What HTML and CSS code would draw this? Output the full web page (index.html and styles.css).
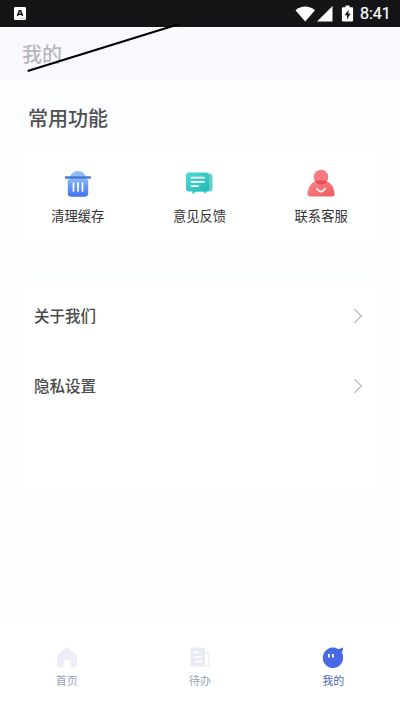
FILE: index.html
```html
<!DOCTYPE html>
<html lang="zh-CN">
<head>
<meta charset="utf-8">
<title>我的</title>
<link rel="stylesheet" href="styles.css">
</head>
<body>
<div class="app">
  <div class="status">
    <svg class="status-app" width="12" height="13" viewBox="0 0 12 13"><rect width="12" height="13" rx="1.3" fill="#fff"/><path d="M3.4 9 L5.4 3.8 H6.6 L8.6 9 M4.2 7.2 H7.8" fill="none" stroke="#151517" stroke-width="1.5"/><path d="M6.5 11.5H11" stroke="#777" stroke-width=".8" stroke-dasharray="1 .6"/></svg>
    <svg width="63" height="18" viewBox="0 0 63 18" fill="#fff"><path d="M.5 5.200C6.300 .2 14 .2 20 5.200L10.200 16.500Z"/><path d="M37.500 1V16.500H22Z"/><path fill-rule="evenodd" d="M48.500 .5h4V2.200h2.600a1 1 0 0 1 1 1V15.500a1 1 0 0 1-1 1h-9.200a1 1 0 0 1-1-1V3.200a1 1 0 0 1 1-1h2.600ZM51.700 4.600 47.600 10.200H50V14.400L53.500 8.600H51.200Z" transform="translate(2)"/></svg>
    <span class="clock">8:41</span>
  </div>
  <header class="header">我的
    <svg class="slash" width="160" height="56" viewBox="0 0 160 56"><path d="M8.500 50.800 158.500 4.300" stroke="#000" stroke-width="2.200" stroke-linecap="round"/></svg>
  </header>
  <main class="main">
    <h2 class="heading">常用功能</h2>
    <section class="card tools">
      <div class="tool">
        <svg width="30" height="30" viewBox="0 0 30 30"><defs><linearGradient id="bin" x1="0" y1="0" x2="0" y2="1"><stop stop-color="#82b4fb"/><stop offset="1" stop-color="#3f70ed"/></linearGradient></defs><circle cx="15" cy="10.500" r="8.500" fill="#8dbcff"/><path d="M4.800 10.500H25.200V24.500Q25 27.800 21.500 27.800H8.500Q5 27.800 4.800 24.500Z" fill="url(#bin)"/><path d="M2 7.300H28V9.700H2Z" fill="#4a75cf"/><path d="M10.500 14V22M15 14V22M19.500 14V22" stroke="#fff" stroke-width="1.700" stroke-linecap="round"/></svg>
        <span>清理缓存</span>
      </div>
      <div class="tool">
        <svg width="30" height="30" viewBox="0 0 30 30"><defs><linearGradient id="chat" x1="0" y1="0" x2="1" y2="1"><stop stop-color="#51d9d2"/><stop offset="1" stop-color="#1bb9b2"/></linearGradient></defs><path d="M9 4.500H25.500Q28.500 4.500 28.500 8V19.500Q28.500 22.500 26 22.500H23.500L20 25V22.500H9Z" fill="#62cfca"/><path d="M5 3.500H22Q25 3.500 25 6.500V19.500Q25 22.500 22 22.500H12L8.500 25.300V22.500H5Q2 22.500 2 19.500V6.500Q2 3.500 5 3.500Z" fill="url(#chat)"/><path d="M7.500 8.700H20M7.500 12.900H20M7.500 17.100H14" stroke="#fff" stroke-width="1.700" stroke-linecap="round"/></svg>
        <span>意见反馈</span>
      </div>
      <div class="tool">
        <svg width="30" height="30" viewBox="0 0 30 30"><defs><linearGradient id="body" x1="0" y1="0" x2="1" y2="1"><stop stop-color="#fa898b"/><stop offset="1" stop-color="#ed5963"/></linearGradient></defs><path d="M1.500 25C2 17 6 12.500 12 11.500H18C24 12.500 28 17 28.500 25Q28.500 27.500 25.500 27.500H4.500Q1.500 27.500 1.500 25Z" fill="url(#body)"/><circle cx="15" cy="8" r="7.300" fill="#f77b7e"/><path d="M9 12.400Q15 10 21 12.400Q19 15.500 15 15.500T9 12.400Z" fill="#e84f56"/><path d="M10.800 19.500Q15 25.500 19.200 19.500" fill="none" stroke="#ffe9e6" stroke-width="2" stroke-linecap="round"/></svg>
        <span>联系客服</span>
      </div>
    </section>
    <section class="card list">
      <div class="row"><span>关于我们</span><svg width="10" height="16" viewBox="0 0 10 16"><path d="M1.500 1.200 8.300 8 1.500 14.800" fill="none" stroke="#c3c3c3" stroke-width="1.600"/></svg></div>
      <div class="row"><span>隐私设置</span><svg width="10" height="16" viewBox="0 0 10 16"><path d="M1.500 1.200 8.300 8 1.500 14.800" fill="none" stroke="#c3c3c3" stroke-width="1.600"/></svg></div>
    </section>
  </main>
  <nav class="nav">
    <div class="tab">
      <svg width="24" height="24" viewBox="0 0 24 24"><path d="M11 2.900Q12 2.200 13 2.900L21 9.500Q22 10.400 22 11.500V20.500Q22 22.500 20 22.500H15.500V18.500Q15.500 15 12 15T8.500 18.500V22.500H4Q2 22.500 2 20.500V11.500Q2 10.400 3 9.500Z" fill="#edeef7"/></svg>
      <span>首页</span>
    </div>
    <div class="tab">
      <svg width="24" height="24" viewBox="0 0 24 24"><path d="M4.500 2.500H15Q17 2.500 17 4.500V21.500H4.500Q2.500 21.500 2.500 19.500V4.500Q2.500 2.500 4.500 2.500Z" fill="#e9ebf4"/><path d="M17.500 8H19.500Q21 8 21 9.500V19.500Q21 21 19 21H17.500" fill="none" stroke="#e9ebf4" stroke-width="1.300"/><path d="M6 7.500H11M6 12H14M6 16.500H14" stroke="#fff" stroke-width="1.700"/></svg>
      <span>待办</span>
    </div>
    <div class="tab active">
      <svg width="24" height="24" viewBox="0 0 24 24"><path d="M16.500 3.700Q19 4.500 22 2.300Q22.300 5.500 20.700 7.600A10.200 10.200 0 1 1 16.500 3.700Z" fill="#4769e4"/><path d="M7.900 9V12.500M11.900 9V12.500" stroke="#fff" stroke-width="1.800"/></svg>
      <span>我的</span>
    </div>
  </nav>
</div>
</body>
</html>
```
FILE: styles.css
```css
* { box-sizing: border-box; }
body {
  margin: 0;
  font-family: "Noto Sans CJK SC", sans-serif;
  background: #fcfdff;
}
.app {
  width: 400px;
  height: 711px;
  display: flex;
  flex-direction: column;
  overflow: hidden;
}
svg { display: block; flex: none; }
.status {
  height: 27px;
  flex: none;
  display: flex;
  align-items: center;
  padding: 0 9px 0 14px;
  background: #151517;
  color: #fff;
}
.status-app { margin-right: auto; }
.clock {
  width: 31px;
  margin-left: 2px;
  font: 400 16px/27px Roboto, sans-serif;
  -webkit-text-stroke: .2px;
  white-space: nowrap;
}
.header {
  position: relative;
  height: 53px;
  flex: none;
  padding-left: 22px;
  background: #f8f9fd;
  color: #b7b8bb;
  font-size: 20px;
  font-weight: 500;
  line-height: 53px;
}
.slash {
  position: absolute;
  left: 20px;
  top: -7px;
}
.main { flex: 1; padding: 23px 18px 0 17px; }
.heading {
  margin: 0 0 14px 11px;
  color: #505052;
  font-size: 20px;
  font-weight: 500;
  line-height: 30px;
}
.card { background: #fff; border-radius: 4px; }
.tools {
  height: 99px;
  display: grid;
  grid-template-columns: repeat(3, 1fr);
  padding-top: 22px;
}
.tool {
  display: flex;
  flex-direction: column;
  align-items: center;
  gap: 7px;
  color: #333;
  font-size: 13.300px;
  line-height: 20px;
}
.list { height: 209px; margin-top: 35px; }
.row {
  height: 70px;
  display: flex;
  align-items: center;
  justify-content: space-between;
  padding: 0 19px 0 17px;
  color: #4a4a4c;
  font-size: 15.500px;
  font-weight: 500;
}
.row span { padding-bottom: 2px; }
.nav {
  height: 88px;
  flex: none;
  display: grid;
  grid-template-columns: repeat(3, 1fr);
  padding-top: 22px;
  background: #fff;
}
.tab {
  display: flex;
  flex-direction: column;
  align-items: center;
  gap: 3px;
  color: #98a2b9;
  font-size: 11px;
  line-height: 16px;
}
.active { color: #4e68ad; }
```
